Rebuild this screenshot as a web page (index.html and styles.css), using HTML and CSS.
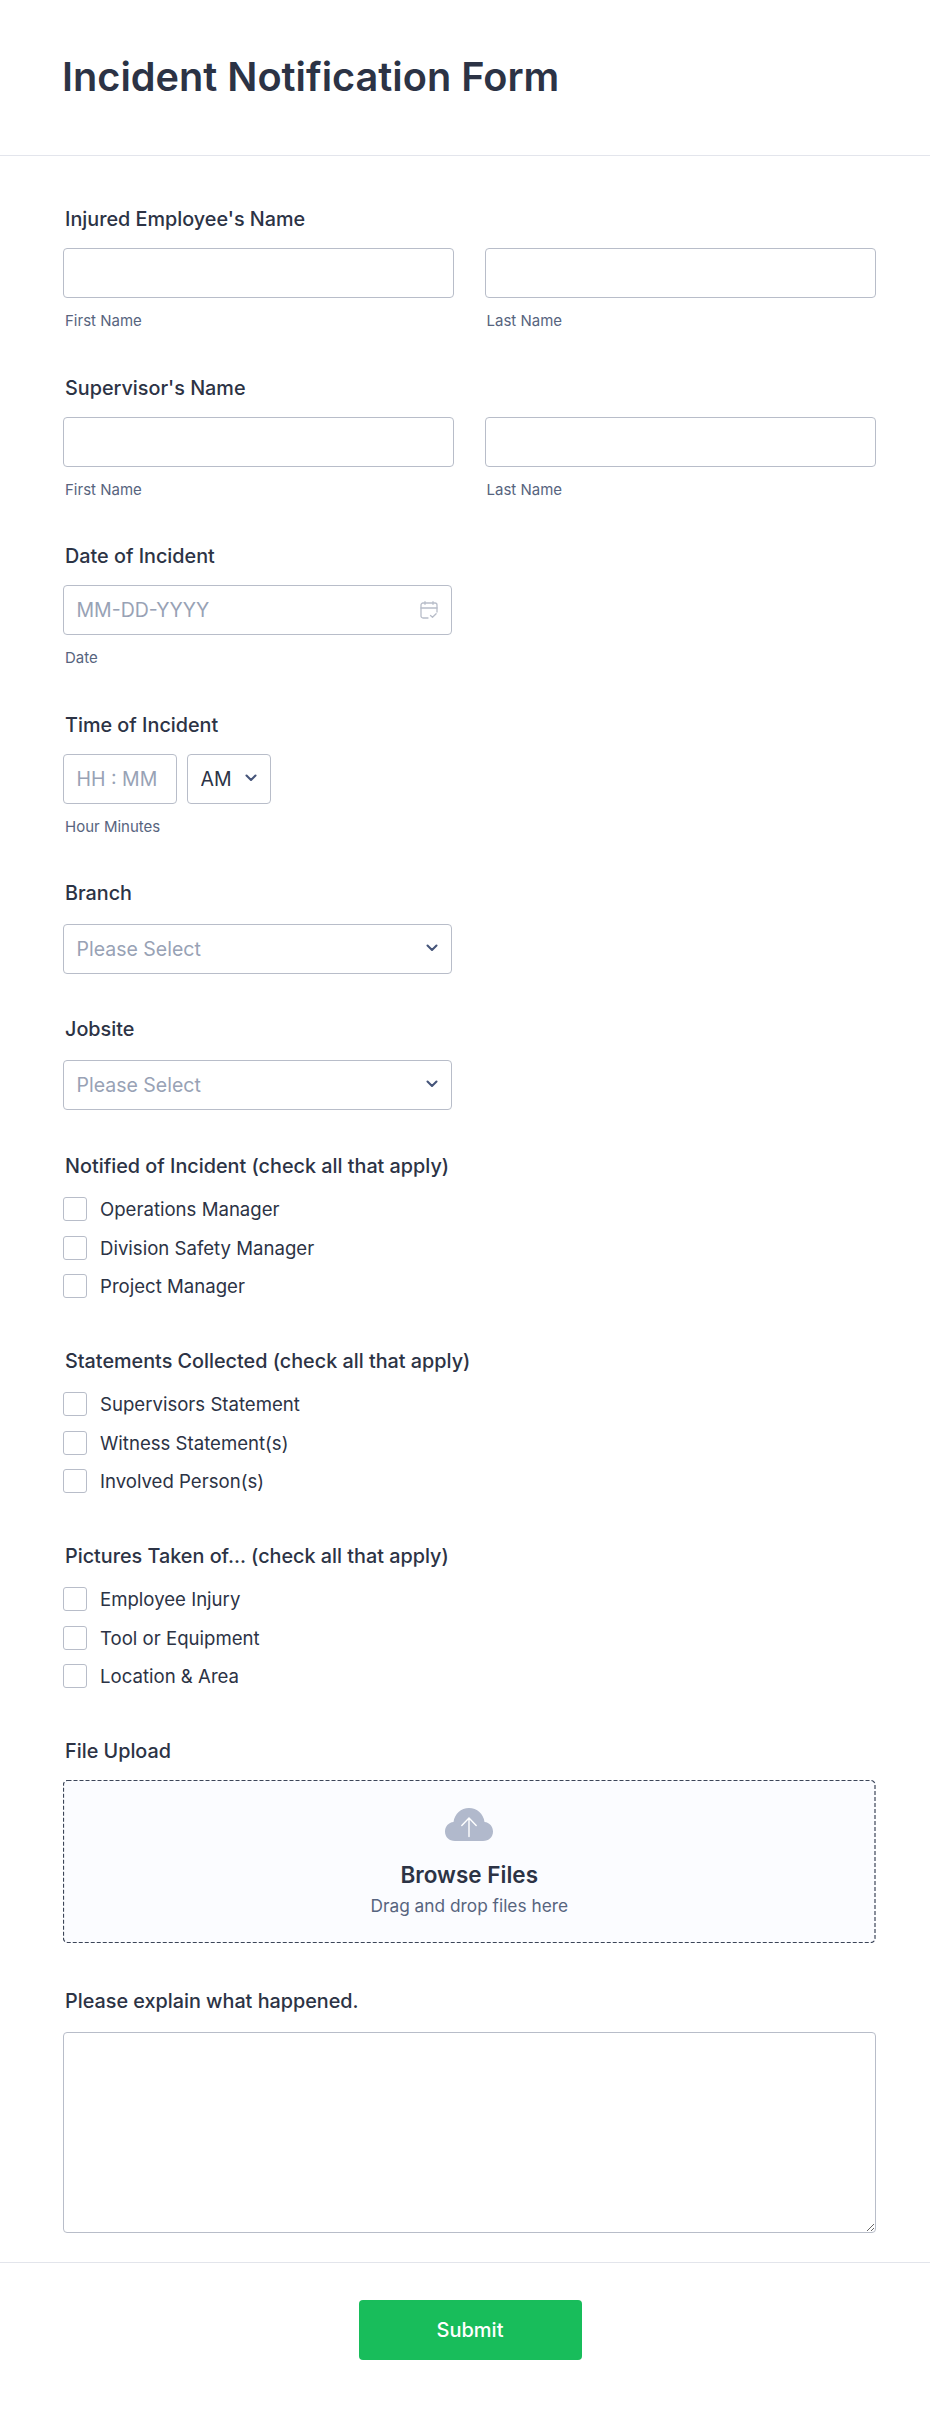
FILE: index.html
```html
<!DOCTYPE html>
<html lang="en">
<head>
<meta charset="utf-8">
<title>Incident Notification Form</title>
<link rel="stylesheet" href="styles.css">
</head>
<body>
<header class="form-header">
  <h1 class="form-title">Incident Notification Form</h1>
</header>
<form class="form-body">
  <div class="field field-sub">
    <label class="field-label">Injured Employee's Name</label>
    <div class="name-row">
      <div class="name-col"><input class="text-input" type="text"><span class="sublabel">First Name</span></div>
      <div class="name-col"><input class="text-input" type="text"><span class="sublabel">Last Name</span></div>
    </div>
  </div>
  <div class="field field-sub">
    <label class="field-label">Supervisor's Name</label>
    <div class="name-row">
      <div class="name-col"><input class="text-input" type="text"><span class="sublabel">First Name</span></div>
      <div class="name-col"><input class="text-input" type="text"><span class="sublabel">Last Name</span></div>
    </div>
  </div>
  <div class="field field-sub">
    <label class="field-label">Date of Incident</label>
    <div class="control-wrap half">
      <input class="text-input" type="text" placeholder="MM-DD-YYYY">
      <svg class="date-icon" viewBox="0 0 18 18" width="18" height="18" fill="none" stroke="#b8bdc9" stroke-width="1.3" stroke-linecap="round" stroke-linejoin="round">
        <path d="M8 17H3a2 2 0 0 1-2-2V4a2 2 0 0 1 2-2h12a2 2 0 0 1 2 2v7"/>
        <path d="M1 7h16M5 .7v2.6M13 .7v2.6"/>
        <path d="M10.5 14.5l2 1.8 3.6-3.6"/>
      </svg>
    </div>
    <span class="sublabel">Date</span>
  </div>
  <div class="field field-sub">
    <label class="field-label">Time of Incident</label>
    <div class="time-row">
      <input class="text-input time-input" type="text" placeholder="HH : MM">
      <div class="control-wrap ampm">
        <select class="select-input select-filled"><option>AM</option><option>PM</option></select>
        <svg class="chevron" viewBox="0 0 12 8" width="12" height="8" fill="none" stroke-width="2.1" stroke-linecap="round" stroke-linejoin="round"><path d="M1.5 1.5L6 6l4.5-4.5"/></svg>
      </div>
    </div>
    <span class="sublabel">Hour Minutes</span>
  </div>
  <div class="field field-select">
    <label class="field-label">Branch</label>
    <div class="control-wrap half">
      <select class="select-input"><option>Please Select</option></select>
      <svg class="chevron" viewBox="0 0 12 8" width="12" height="8" fill="none" stroke-width="2.1" stroke-linecap="round" stroke-linejoin="round"><path d="M1.5 1.5L6 6l4.5-4.5"/></svg>
    </div>
  </div>
  <div class="field field-select">
    <label class="field-label">Jobsite</label>
    <div class="control-wrap half">
      <select class="select-input"><option>Please Select</option></select>
      <svg class="chevron" viewBox="0 0 12 8" width="12" height="8" fill="none" stroke-width="2.1" stroke-linecap="round" stroke-linejoin="round"><path d="M1.5 1.5L6 6l4.5-4.5"/></svg>
    </div>
  </div>
  <div class="field field-check">
    <label class="field-label">Notified of Incident (check all that apply)</label>
    <div class="check-list">
      <label class="check-item"><span class="check-box"></span>Operations Manager</label>
      <label class="check-item"><span class="check-box"></span>Division Safety Manager</label>
      <label class="check-item"><span class="check-box"></span>Project Manager</label>
    </div>
  </div>
  <div class="field field-check">
    <label class="field-label">Statements Collected (check all that apply)</label>
    <div class="check-list">
      <label class="check-item"><span class="check-box"></span>Supervisors Statement</label>
      <label class="check-item"><span class="check-box"></span>Witness Statement(s)</label>
      <label class="check-item"><span class="check-box"></span>Involved Person(s)</label>
    </div>
  </div>
  <div class="field field-check">
    <label class="field-label">Pictures Taken of... (check all that apply)</label>
    <div class="check-list">
      <label class="check-item"><span class="check-box"></span>Employee Injury</label>
      <label class="check-item"><span class="check-box"></span>Tool or Equipment</label>
      <label class="check-item"><span class="check-box"></span>Location &amp; Area</label>
    </div>
  </div>
  <div class="field field-upload">
    <label class="field-label">File Upload</label>
    <div class="upload-box">
      <svg class="upload-outline"><rect class="upload-dash" rx="4" ry="4"/></svg>
      <svg class="cloud" viewBox="0 0 48 33" width="48" height="33">
        <path fill="#b1b9cc" d="M10 33C4 33 0 29 0 23.5 0 18.5 3.5 14.5 8.5 14 9.5 6 16 0 24 0s14.5 6 15.5 14C44.5 14.5 48 18.5 48 23.5 48 29 44 33 38 33Z"/>
        <path fill="none" stroke="#fff" stroke-width="1.4" stroke-linecap="round" stroke-linejoin="round" d="M24 28.5V10M16.8 17.5L24 10l7.2 7.5"/>
      </svg>
      <div class="upload-title">Browse Files</div>
      <div class="upload-hint">Drag and drop files here</div>
    </div>
  </div>
  <div class="field field-last">
    <label class="field-label">Please explain what happened.</label>
    <textarea class="text-area"></textarea>
  </div>
</form>
<footer class="form-footer">
  <button class="submit-btn" type="button">Submit</button>
</footer>
</body>
</html>
```
FILE: styles.css
```css
* { box-sizing: border-box; }
html, body { margin: 0; padding: 0; background: #fff; }
body { font-family: Inter, "Liberation Sans", sans-serif; color: #2c3345; width: 930px; height: 2409px; overflow: hidden; }

.form-header { height: 156px; border-bottom: 1px solid #e3e5ec; padding: 52px 62px 0; }
.form-title { margin: 0; font-size: 39.7px; line-height: 50px; font-weight: 600; color: #2c3345; }

.form-body { padding: 50px 54px 0 63px; }
.field { margin-bottom: 43.5px; }
.field-select { margin-bottom: 42.25px; }
.field-check { margin-bottom: 49.5px; }
.field-upload { margin-bottom: 44.5px; }
.field-last { margin-bottom: 29px; }
.field-label { display: block; font-size: 19.8px; line-height: 27px; font-weight: 500; color: #2c3345; padding-left: 2px; margin-bottom: 15px; }
.field-select .field-label { margin-bottom: 17px; }
.field-check .field-label { margin-bottom: 17.5px; }
.field-upload .field-label { margin-bottom: 15.5px; }
.field-last .field-label { margin-bottom: 17.5px; }

.name-row { display: flex; gap: 30.5px; }
.name-col { flex: 0 0 391px; width: 391px; }
.text-input, .select-input { display: block; width: 100%; height: 50px; border: 1px solid #b8bdc9; border-radius: 4px; background: #fff; font-family: inherit; font-size: 19.5px; color: #2c3345; padding: 0 12.5px; outline: none; }
.text-input::placeholder { color: #98a2b5; opacity: 1; }
.select-input { appearance: none; -webkit-appearance: none; color: #98a2b5; }
.select-filled { color: #2c3345; }

.sublabel { display: block; font-size: 15px; line-height: 20px; color: #57647e; padding-left: 2px; margin-top: 13px; }

.control-wrap { position: relative; }
.half { width: 389px; }
.date-icon { position: absolute; right: 14px; top: 15.5px; }
.chevron { position: absolute; right: 14px; top: 20px; stroke: #46557a; }

.time-row { display: flex; gap: 10px; }
.time-input { width: 114px; }
.ampm { width: 84px; }

.check-list { display: flex; flex-direction: column; gap: 14.5px; }
.check-item { display: flex; align-items: center; height: 24px; font-size: 18.6px; color: #2c3345; }
.check-box { flex: none; width: 24px; height: 24px; border: 1px solid #b8bdc9; border-radius: 3px; background: #fff; margin-right: 13px; }

.upload-box { position: relative; width: 812.5px; height: 163px; border-radius: 4px; background: #fbfcff; display: flex; flex-direction: column; align-items: center; padding-top: 28px; }
.upload-outline { position: absolute; inset: 0; width: 100%; height: 100%; }
.upload-dash { x: 0.5px; y: 0.5px; width: calc(100% - 1px); height: calc(100% - 1px); fill: none; stroke: #3c4558; stroke-width: 1.2; stroke-dasharray: 4 2; }
.cloud { display: block; }
.upload-title { font-size: 22.5px; line-height: 28px; font-weight: 600; color: #2c3345; margin-top: 20px; }
.upload-hint { font-size: 17.3px; line-height: 24px; color: #57647e; margin-top: 5px; }

.text-area { display: block; width: 812.5px; height: 201px; border: 1px solid #b8bdc9; border-radius: 4px; background: #fff; outline: none; }

.form-footer { border-top: 1px solid #e3e5ec; padding: 37px 0 0 10px; display: flex; justify-content: center; }
.submit-btn { width: 223px; height: 60px; background: #18bd5b; border: 0; border-radius: 4px; color: #fff; font-family: inherit; font-size: 20px; font-weight: 500; }
```
